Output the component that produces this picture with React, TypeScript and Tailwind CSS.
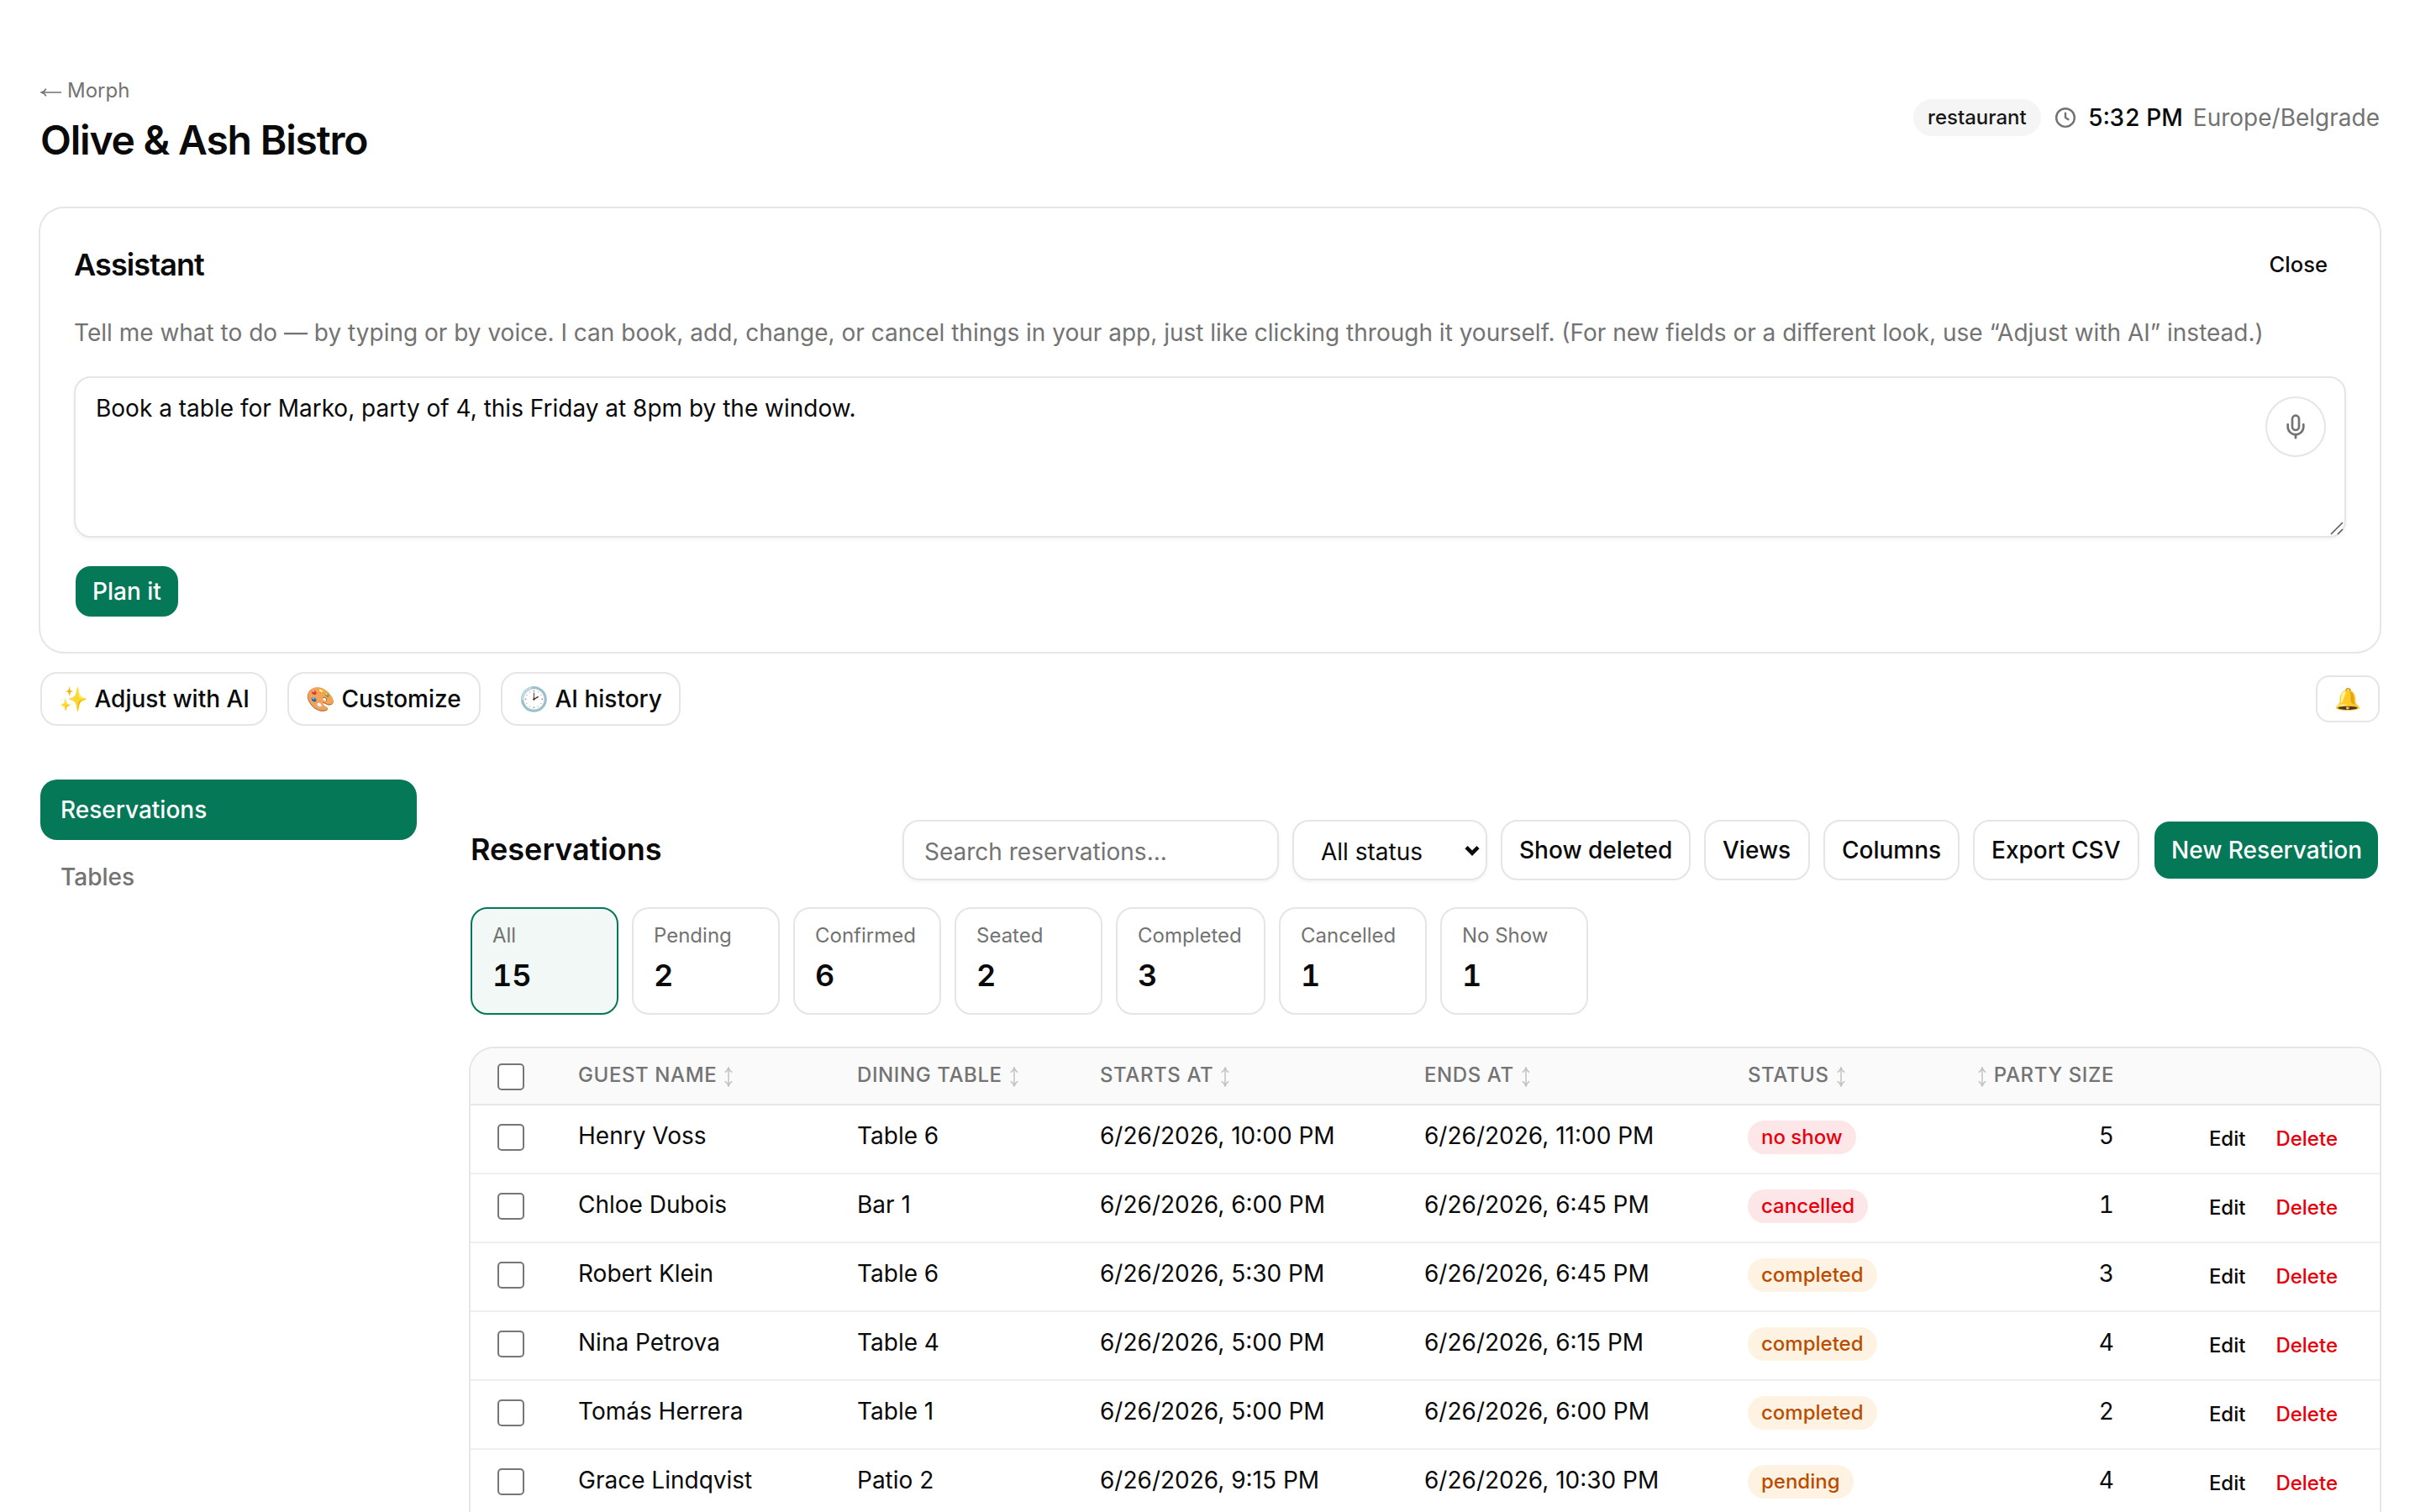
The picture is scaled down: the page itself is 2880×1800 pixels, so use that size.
import { Mic } from "lucide-react";
import type { ReactNode } from "react";

type Row = { guest: string; table: string; starts: string; ends: string; status: string; size: number };

const rows: Row[] = [
  { guest: "Henry Voss", table: "Table 6", starts: "6/26/2026, 10:00 PM", ends: "6/26/2026, 11:00 PM", status: "no show", size: 5 },
  { guest: "Chloe Dubois", table: "Bar 1", starts: "6/26/2026, 6:00 PM", ends: "6/26/2026, 6:45 PM", status: "cancelled", size: 1 },
  { guest: "Robert Klein", table: "Table 6", starts: "6/26/2026, 5:30 PM", ends: "6/26/2026, 6:45 PM", status: "completed", size: 3 },
  { guest: "Nina Petrova", table: "Table 4", starts: "6/26/2026, 5:00 PM", ends: "6/26/2026, 6:15 PM", status: "completed", size: 4 },
  { guest: "Tomás Herrera", table: "Table 1", starts: "6/26/2026, 5:00 PM", ends: "6/26/2026, 6:00 PM", status: "completed", size: 2 },
  { guest: "Grace Lindqvist", table: "Patio 2", starts: "6/26/2026, 9:15 PM", ends: "6/26/2026, 10:30 PM", status: "pending", size: 4 },
];

const stats: [string, number][] = [
  ["All", 15],
  ["Pending", 2],
  ["Confirmed", 6],
  ["Seated", 2],
  ["Completed", 3],
  ["Cancelled", 1],
  ["No Show", 1],
];

const columns = "grid grid-cols-[96px_332px_289px_386px_385px_196px_240px_1fr]";

function OutlineButton({ children, className }: { children: ReactNode; className: string }) {
  return (
    <button className={`${className} flex shrink-0 items-center rounded-[20px] border-2 border-[#e5e5e5] bg-white pl-5 text-[28px] font-medium whitespace-pre`}>
      {children}
    </button>
  );
}

function PrimaryButton({ children, className }: { children: ReactNode; className: string }) {
  return (
    <button className={`${className} flex shrink-0 items-center rounded-[20px] border-2 border-transparent bg-[#047857] bg-clip-padding pl-5 text-[28px] font-medium whitespace-nowrap text-white`}>
      {children}
    </button>
  );
}

function Checkbox({ className }: { className: string }) {
  return <span className={`${className} block size-8 rounded-[5px] border-2 border-[#767676] bg-white`} />;
}

function Sort() {
  return (
    <svg className="mx-[2px] inline-block h-6 w-[10px] align-[-6px] opacity-40" viewBox="0 0 10 24" fill="none" stroke="#737373" strokeWidth="1.5">
      <path d="M5 1v22M.7 6.6C2.8 5.6 4.2 3.6 5 1c.8 2.6 2.2 4.6 4.3 5.6M.7 17.4c2.1 1 3.5 3 4.3 5.6.8-2.6 2.2-4.6 4.3-5.6" />
    </svg>
  );
}

function StatusBadge({ status }: { status: string }) {
  const tone = status === "no show" || status === "cancelled" ? "bg-[#fce6e8] text-[#e7000b]" : "bg-[#fef3e2] text-[#bb4d00]";
  return <span className={`flex h-10 items-center rounded-full px-4 pb-px text-[24px] font-medium ${tone}`}>{status}</span>;
}

export default function App() {
  return (
    <div className="h-[1800px] w-[2880px] overflow-hidden bg-white px-12 pt-[92px] font-[Inter,sans-serif] text-[#0a0a0a]">
      <header className="flex h-[156px] justify-between">
        <div>
          <div className="flex h-8 items-center gap-[7px] text-[24px] leading-8 text-[#737373]">
            <svg className="mt-[3px] h-[10px] w-[25px]" viewBox="0 0 25 10" fill="none" stroke="#737373" strokeWidth="1.6">
              <path d="M1.2 5H25M6.8.6C5.8 2.8 3.8 4.2 1.2 5c2.6.8 4.6 2.2 5.6 4.4" />
            </svg>
            Morph
          </div>
          <h1 className="mt-[11px] text-[48px] leading-[64px] font-semibold tracking-[-0.025em]">Olive &amp; Ash Bistro</h1>
        </div>
        <div className="mt-[26px] flex h-11 items-center text-[28px]">
          <span className="flex h-11 w-[152px] items-center justify-center rounded-full bg-[#f5f5f5] text-[24px] font-medium text-[#171717]">restaurant</span>
          <svg className="ml-[15px] size-7" viewBox="0 0 16 16" fill="none" stroke="#737373" strokeWidth="1.4" strokeLinecap="round" strokeLinejoin="round">
            <circle cx="8" cy="8" r="6.2" />
            <path d="M8 5v3l2 1.25" />
          </svg>
          <span className="ml-[13px] font-medium tabular-nums">5:32 PM</span>
          <span className="ml-3 text-[#737373]">Europe/Belgrade</span>
        </div>
      </header>

      <section className="flex h-[528px] flex-col gap-8 rounded-[28px] p-10 ring-2 ring-[#e6e6e6]">
        <div className="flex h-14 items-center justify-between pb-[2px]">
          <h2 className="text-[36px] font-semibold tracking-[-0.025em]">Assistant</h2>
          <button className="px-[22px] text-[25.6px] font-medium">Close</button>
        </div>
        <p className="text-[28px] leading-10 whitespace-nowrap text-[#737373]">
          Tell me what to do — by typing or by voice. I can book, add, change, or cancel things in your app, just like clicking through it yourself. (For new fields or a different look, use “Adjust with AI” instead.)
        </p>
        <div className="relative flex h-48 justify-between rounded-[20px] border-2 border-[#e5e5e5] px-6 py-4 text-[28px] leading-10 shadow-[0_2px_4px_rgba(0,0,0,0.05)]">
          <span>Book a table for Marko, party of 4, this Friday at 8pm by the window.</span>
          <button className="-mr-[2px] mt-[6px] flex size-[72px] items-center justify-center rounded-full border-2 border-[#e5e5e5] text-[#737373]">
            <Mic size={32} />
          </button>
          <svg className="absolute right-0 bottom-0 size-5" viewBox="0 0 20 20" stroke="#5c5c5c" strokeWidth="1.6">
            <path d="M4 18 18 4M12 18l6-6" />
          </svg>
        </div>
        <PrimaryButton className="h-16 w-[126px] self-start">Plan it</PrimaryButton>
      </section>

      <div className="mt-6 flex h-16 items-center gap-6">
        <OutlineButton className="h-16 w-[270px]">✨ Adjust with AI</OutlineButton>
        <OutlineButton className="h-16 w-[230px]">🎨 Customize</OutlineButton>
        <OutlineButton className="h-16 w-[214px]">🕑 AI history</OutlineButton>
        <button className="ml-auto flex h-14 w-[76px] items-center justify-center rounded-2xl border-2 border-[#e5e5e5] text-[25.6px]">🔔</button>
      </div>

      <div className="mt-16 flex gap-16">
        <nav className="flex w-[448px] shrink-0 flex-col gap-2 text-[28px] font-medium">
          <a className="flex h-[72px] items-center rounded-[20px] bg-[#047857] px-6 text-white">Reservations</a>
          <a className="flex h-[72px] items-center px-6 text-[#737373]">Tables</a>
        </nav>

        <main className="min-w-0 flex-1 pt-12">
          <div className="flex h-[72px] items-center gap-4">
            <h2 className="mr-auto pb-[2px] text-[36px] font-semibold">Reservations</h2>
            <div className="flex h-[72px] w-[448px] items-center rounded-[20px] border-2 border-[#e5e5e5] px-6 pt-[3px] text-[28px] text-[#737373] shadow-[0_2px_4px_rgba(0,0,0,0.05)]">
              Search reservations...
            </div>
            <div className="flex h-[72px] w-[232px] items-center justify-between rounded-[20px] border-2 border-[#e5e5e5] pr-[6px] pl-8 text-[28px] shadow-[0_2px_4px_rgba(0,0,0,0.05)]">
              <span className="pt-[3px]">All status</span>
              <svg className="mt-px h-[13px] w-5" viewBox="0 0 20 13" fill="none" stroke="#0a0a0a" strokeWidth="4.5">
                <path d="m3 2.7 7 7 7-7" />
              </svg>
            </div>
            <OutlineButton className="h-[72px] w-[226px]">Show deleted</OutlineButton>
            <OutlineButton className="h-[72px] w-[126px]">Views</OutlineButton>
            <OutlineButton className="h-[72px] w-[162px]">Columns</OutlineButton>
            <OutlineButton className="h-[72px] w-[198px]">Export CSV</OutlineButton>
            <PrimaryButton className="h-[72px] w-[270px]">New Reservation</PrimaryButton>
          </div>

          <div className="mt-8 flex gap-4">
            {stats.map(([label, count]) => (
              <div
                key={label}
                className={`h-32 rounded-[20px] border-2 px-6 py-4 ${label === "Completed" ? "w-[178px]" : "w-[176px]"} ${label === "All" ? "border-[#047857] bg-[#f2f8f6]" : "border-[#e5e5e5]"}`}
              >
                <div className="text-[24px] leading-8 whitespace-nowrap text-[#737373]">{label}</div>
                <div className="mt-[3px] text-[36px] leading-[56px] font-semibold tabular-nums">{count}</div>
              </div>
            ))}
          </div>

          <div className="mt-10 overflow-hidden rounded-t-[28px] ring-2 ring-[#e6e6e6]">
            <div className={`${columns} h-[68px] items-center border-b-2 border-[#e5e5e5] bg-[#fafafa] pl-8 text-[24px] leading-8 font-medium tracking-[0.025em] whitespace-nowrap text-[#737373]`}>
              <Checkbox className="mt-[2px]" />
              <span className="h-[35px]">GUEST NAME <Sort /></span>
              <span className="h-[35px]">DINING TABLE <Sort /></span>
              <span className="h-[35px]">STARTS AT <Sort /></span>
              <span className="h-[35px]">ENDS AT <Sort /></span>
              <span className="h-[35px]">STATUS <Sort /></span>
              <span className="h-[35px] text-right"><Sort /> PARTY SIZE</span>
            </div>
            {rows.map((row) => (
              <div key={row.guest} className={`${columns} h-[82px] items-center border-b-2 border-[#eeeeee] pl-8 text-[28px] leading-10 whitespace-nowrap`}>
                <Checkbox className="mb-1" />
                <span className="pb-2">{row.guest}</span>
                <span className="pb-2">{row.table}</span>
                <span className="pb-2">{row.starts}</span>
                <span className="pb-2">{row.ends}</span>
                <span className="flex pb-1"><StatusBadge status={row.status} /></span>
                <span className="pb-2 text-right tabular-nums">{row.size}</span>
                <span className="flex justify-end gap-9 pr-[50px] pb-px text-[24px] font-medium">
                  <span>Edit</span>
                  <span className="text-[#e7000b]">Delete</span>
                </span>
              </div>
            ))}
          </div>
        </main>
      </div>
    </div>
  );
}
